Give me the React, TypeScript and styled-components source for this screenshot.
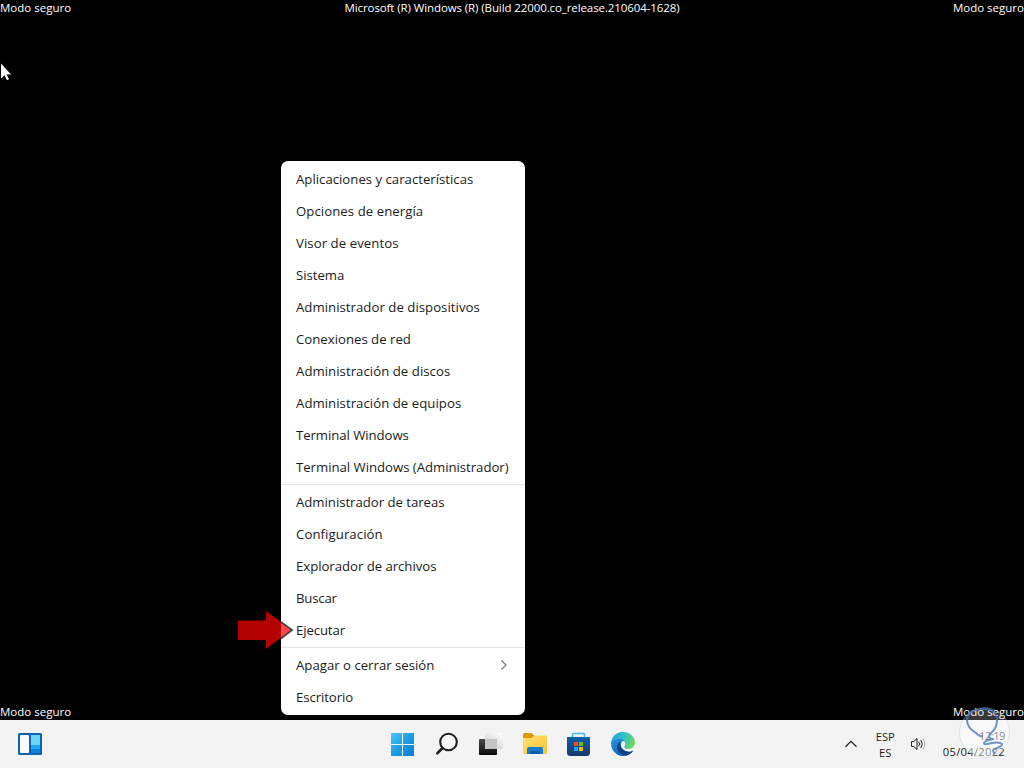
import React from "react";
import styled, { createGlobalStyle } from "styled-components";

const Global = createGlobalStyle`
  * { box-sizing: border-box; }
  body { margin: 0; background: #000; overflow: hidden; }
`;

const Screen = styled.div`
  position: relative;
  width: 1024px;
  height: 768px;
  display: flex;
  flex-direction: column;
  background: #000;
  font-family: "Open Sans", "Noto Sans", sans-serif;
  overflow: hidden;
`;

const Desktop = styled.main`
  flex: 1;
  display: flex;
  flex-direction: column;
  justify-content: space-between;
`;

const NoticeRow = styled.div`
  display: flex;
  justify-content: space-between;
  height: 16px;
  line-height: 16px;
  font-size: 11.5px;
  color: #fff;
  white-space: nowrap;
`;

const Notice = styled.span<{ $spacing?: number }>`
  letter-spacing: ${(p) => p.$spacing ?? 0}px;
`;

const Menu = styled.nav`
  position: absolute;
  left: 281px;
  top: 161px;
  width: 244px;
  padding: 2px 0;
  border-radius: 7px;
  background: #fff;
`;

const Item = styled.div<{ $spacing: number }>`
  display: flex;
  align-items: center;
  justify-content: space-between;
  height: 32px;
  padding: 0 16px 0 15px;
  font-size: 13.2px;
  letter-spacing: ${(p) => p.$spacing}px;
  color: #1b1b1b;
  white-space: nowrap;
`;

const Separator = styled.div`
  height: 3px;
  padding: 1px 0;
  background: #e5e5e5 content-box;
`;

const Taskbar = styled.footer`
  display: grid;
  grid-template-columns: 381px 264px 1fr;
  align-items: center;
  height: 48px;
  background: #f3f3f3;
`;

const Widgets = styled.div`
  display: flex;
  padding-left: 18px;
`;

const Pinned = styled.div`
  display: grid;
  grid-template-columns: repeat(6, 44px);
  justify-items: center;
`;

const Tray = styled.div`
  display: flex;
  align-items: center;
  justify-content: flex-end;
  padding-right: 19px;
  color: #1b1b1b;
`;

const TrayText = styled.div<{ $align: string; $spacing: number }>`
  font-size: 11.2px;
  line-height: 16px;
  text-align: ${(p) => p.$align};
  letter-spacing: ${(p) => p.$spacing}px;
  white-space: nowrap;
`;

const Language = styled.div`
  margin: 0 15px 0 18px;
  padding-top: 2px;
`;

const Clock = styled.div`
  margin-left: 17px;
`;

const Icon = styled.svg`
  display: block;
`;

const Overlay = styled.svg<{ $x: number; $y: number }>`
  position: absolute;
  left: ${(p) => p.$x}px;
  top: ${(p) => p.$y}px;
`;

const groups: { label: string; spacing?: number; submenu?: boolean }[][] = [
  [
    { label: "Aplicaciones y características" },
    { label: "Opciones de energía", spacing: 0.06 },
    { label: "Visor de eventos", spacing: 0.06 },
    { label: "Sistema", spacing: -0.04 },
    { label: "Administrador de dispositivos", spacing: 0.03 },
    { label: "Conexiones de red" },
    { label: "Administración de discos", spacing: 0.04 },
    { label: "Administración de equipos", spacing: 0.04 },
    { label: "Terminal Windows", spacing: -0.07 },
    { label: "Terminal Windows (Administrador)", spacing: -0.03 },
  ],
  [
    { label: "Administrador de tareas", spacing: -0.03 },
    { label: "Configuración", spacing: 0.08 },
    { label: "Explorador de archivos", spacing: -0.04 },
    { label: "Buscar", spacing: -0.2 },
    { label: "Ejecutar", spacing: -0.12 },
  ],
  [
    { label: "Apagar o cerrar sesión", submenu: true },
    { label: "Escritorio", spacing: -0.08 },
  ],
];

const Chevron = () => (
  <Icon width="10" height="12" viewBox="0 0 10 12" fill="none">
    <path d="M2.5 1.5 7 6 2.5 10.5" stroke="#777" strokeWidth="1.1" />
  </Icon>
);

const WidgetsIcon = () => (
  <Icon width="24" height="22" viewBox="0 0 24 22">
    <rect width="24" height="22" rx="1.5" fill="#0d63b0" />
    <rect x="2" y="2" width="9" height="18" rx="1" fill="#fbfbfb" />
    <rect x="13" y="2" width="9" height="10" fill="#6bd5fb" />
    <rect x="13" y="12" width="9" height="4" fill="#1ea4f5" />
    <rect x="13" y="16" width="9" height="4" fill="#0c80dc" />
  </Icon>
);

const StartIcon = () => (
  <Icon width="24" height="24" viewBox="0 0 24 24">
    <defs>
      <linearGradient id="start" x1="0" y1="0" x2="24" y2="24" gradientUnits="userSpaceOnUse">
        <stop stopColor="#4cc8f8" />
        <stop offset=".5" stopColor="#1c9ee5" />
        <stop offset="1" stopColor="#0877d2" />
      </linearGradient>
    </defs>
    <path fill="url(#start)" d="M0 1h11v11H0zM12 1h11v11H12zM0 13h11v11H0zM12 13h11v11H12z" />
  </Icon>
);

const SearchIcon = () => (
  <Icon width="24" height="24" viewBox="0 0 24 24" fill="none">
    <circle cx="13.5" cy="10" r="8.3" fill="#f8f8f8" stroke="#202020" strokeWidth="2.1" />
    <path d="m7.5 16-5.200 5.400" stroke="#202020" strokeWidth="2.6" strokeLinecap="round" />
  </Icon>
);

const TaskViewIcon = () => (
  <Icon width="24" height="24" viewBox="0 0 24 24">
    <defs>
      <linearGradient id="back" x1="0" y1="0" x2="0" y2="1">
        <stop stopColor="#4b4b4b" />
        <stop offset="1" stopColor="#080808" />
      </linearGradient>
      <linearGradient id="front" x1="1" y1="0" x2=".3" y2="1">
        <stop stopColor="#fff" />
        <stop offset="1" stopColor="#d0d0d0" />
      </linearGradient>
    </defs>
    <rect x="0" y="7" width="18" height="16" rx="1" fill="url(#back)" />
    <rect x="6" y="1" width="18" height="16" rx="1" fill="url(#front)" />
    <path d="M6 7h12v10H6z" fill="#c4c4c4" />
  </Icon>
);

const FolderIcon = () => (
  <Icon width="24" height="24" viewBox="0 0 24 24">
    <defs>
      <linearGradient id="folder" x1="0" y1="0" x2="1" y2="1">
        <stop stopColor="#ffdf75" />
        <stop offset="1" stopColor="#ffc52f" />
      </linearGradient>
    </defs>
    <path d="M0 2.5Q0 1 1.5 1h7l3 3H24v4H0z" fill="#dc9a08" />
    <path d="M0 6h8.5l3-2.500H23q1 0 1 1V21q0 1-1 1H1q-1 0-1-1z" fill="url(#folder)" />
    <path d="M4 22v-5q0-2 2-2h12q2 0 2 2v5z" fill="#177bd0" />
    <path d="M7.500 22v-2q0-1 1-1h7q1 0 1 1v2z" fill="#0b59a2" />
  </Icon>
);

const StoreIcon = () => (
  <Icon width="24" height="24" viewBox="0 0 24 24">
    <defs>
      <linearGradient id="store" x1="0" y1="0" x2="0" y2="1">
        <stop stopColor="#0960aa" />
        <stop offset="1" stopColor="#1b376a" />
      </linearGradient>
    </defs>
    <path d="M5.500 6V2.500q0-1 1-1h10q1 0 1 1V6" fill="none" stroke="#43b7ee" strokeWidth="1.6" />
    <path d="M0 5h23v15.500q0 3.500-3.500 3.500h-16Q0 24 0 20.500z" fill="url(#store)" />
    <path d="M7 10h4v4H7z" fill="#f25022" />
    <path d="M12 10h4v4h-4z" fill="#7fba00" />
    <path d="M7 15h4v4H7z" fill="#20a8ec" />
    <path d="M12 15h4v4h-4z" fill="#ffb900" />
  </Icon>
);

const EdgeIcon = () => (
  <Icon width="24" height="24" viewBox="0 0 24 24">
    <defs>
      <linearGradient id="wave" x1="0" y1="0" x2="24" y2="8" gradientUnits="userSpaceOnUse">
        <stop stopColor="#249bd7" />
        <stop offset=".5" stopColor="#2dbed0" />
        <stop offset="1" stopColor="#6adc60" />
      </linearGradient>
      <linearGradient id="body" x1="0" y1="8" x2="10" y2="24" gradientUnits="userSpaceOnUse">
        <stop stopColor="#2292df" />
        <stop offset="1" stopColor="#0b62b8" />
      </linearGradient>
    </defs>
    <path d="M12 0A12 12 0 1 0 22.500 18L16 16.500 23 8 12 0z" fill="url(#body)" />
    <path d="M9.600 9.200C6.500 11 5.500 14 6.600 17.300 8 21.500 12.500 24 16.500 23.100c2.500-.8 4.600-2.300 6-4.600-4 2.200-8.900 1.300-11.300-1.700-1.900-2.300-2.400-5.600-1.600-7.600z" fill="#103f85" />
    <path d="M11.300 9.200c2-.7 3.500.8 3.300 2.700-.2 1.500-1 2-1 3 0 1.200 1.500 1.900 4.100 1.900 2.500 0 4.500-1.100 6-3.400.4 1.800.2 3.500-1.100 5.100-4 2.200-8.900 1-11.300-1.900-1.900-2.300-1.900-5.600 0-7.400z" fill="#f3f3f3" />
    <path d="M.2 10C1.500 3.500 6.500 0 12 0c7 0 12 5 12 10.500 0 4-3 6.300-6.300 6.300-3 0-4.100-1-4.100-1.900 0-.8 1-1.300 1-3.100 0-2.600-2.800-4.800-6.300-4.800C4.500 7 1.200 9 .2 10z" fill="url(#wave)" />
  </Icon>
);

const UpIcon = () => (
  <Icon width="14" height="10" viewBox="0 0 14 10" fill="none">
    <path d="m1.500 7.800 5.500-5.500 5.500 5.500" stroke="#222" strokeWidth="1.3" />
  </Icon>
);

const VolumeIcon = () => (
  <Icon width="16" height="16" viewBox="0 0 16 16" fill="none" strokeWidth="1">
    <path d="M1.500 5.500h2.300L7 2.500v11l-3.200-3H1.500z" stroke="#222" />
    <path d="M8.800 5.800q1.500 2.200 0 4.400M10.800 4q3 4 0 8" stroke="#222" />
    <path d="M12.800 2.400q4.200 5.600 0 11.200" stroke="#aaa" />
  </Icon>
);

const Watermark = () => (
  <Overlay $x={957} $y={705} width="56" height="56" viewBox="0 0 56 56" fill="none">
    <defs>
      <linearGradient id="disc" x1="0" y1="0" x2="0" y2="56" gradientUnits="userSpaceOnUse">
        <stop stopColor="#fff" stopOpacity=".22" />
        <stop offset=".265" stopColor="#fff" stopOpacity=".22" />
        <stop offset=".27" stopColor="#fff" stopOpacity=".46" />
        <stop offset="1" stopColor="#fff" stopOpacity=".46" />
      </linearGradient>
    </defs>
    <circle cx="27.500" cy="27.500" r="25" fill="url(#disc)" stroke="#9db8dc" strokeOpacity=".3" />
    <path
      d="M25 31c-2 1-4-1-6-3C14 25 10 21 10 15 10 8 17 4 26 4s14 4 14 11c0 5-1 8-4 11-2 2-4 3-4 6 0 1 2 2 4 2-4 1-9 2-9 4s4 1 8 0c4-.8 10-.5 10 1.500 0 2.500-9 4-9 6s2 1.500 1 3"
      stroke="#3f72b8"
      strokeOpacity=".75"
      strokeWidth="2"
      strokeLinecap="round"
      strokeLinejoin="round"
    />
  </Overlay>
);

export default function App() {
  return (
    <Screen>
      <Global />
      <Desktop>
        <NoticeRow>
          <Notice>Modo seguro</Notice>
          <Notice $spacing={-0.1}>Microsoft (R) Windows (R) (Build 22000.co_release.210604-1628)</Notice>
          <Notice>Modo seguro</Notice>
        </NoticeRow>
        <NoticeRow>
          <Notice>Modo seguro</Notice>
          <Notice>Modo seguro</Notice>
        </NoticeRow>
      </Desktop>
      <Menu>
        {groups.map((items, i) => (
          <React.Fragment key={i}>
            {i > 0 && <Separator />}
            {items.map((item) => (
              <Item key={item.label} $spacing={item.spacing ?? 0}>
                <span>{item.label}</span>
                {item.submenu && <Chevron />}
              </Item>
            ))}
          </React.Fragment>
        ))}
      </Menu>
      <Taskbar>
        <Widgets><WidgetsIcon /></Widgets>
        <Pinned>
          <StartIcon />
          <SearchIcon />
          <TaskViewIcon />
          <FolderIcon />
          <StoreIcon />
          <EdgeIcon />
        </Pinned>
        <Tray>
          <UpIcon />
          <Language>
            <TrayText $align="center" $spacing={0}>ESP</TrayText>
            <TrayText $align="center" $spacing={0}>ES</TrayText>
          </Language>
          <VolumeIcon />
          <Clock>
            <TrayText $align="right" $spacing={-0.5}>12:19</TrayText>
            <TrayText $align="right" $spacing={0.28}>05/04/2022</TrayText>
          </Clock>
        </Tray>
      </Taskbar>
      <Overlay $x={0} $y={62} width="14" height="20" viewBox="0 0 14 20">
        <path d="M1 1.500v15l3.500-3.200 2.500 5 2-1-2.400-4.800H11z" fill="#fff" />
      </Overlay>
      <Overlay $x={236} $y={608} width="60" height="44" viewBox="0 0 60 44">
        <path d="M2 12.500h28V3l26 19-26 19v-9H2z" fill="#b30000" />
        <path d="M45 14 56 22 45 30.500z" fill="#ff4848" />
        <path d="M45 14 56 22 45 30.500" fill="none" stroke="#444" strokeWidth="1.800" />
      </Overlay>
      <Watermark />
    </Screen>
  );
}
